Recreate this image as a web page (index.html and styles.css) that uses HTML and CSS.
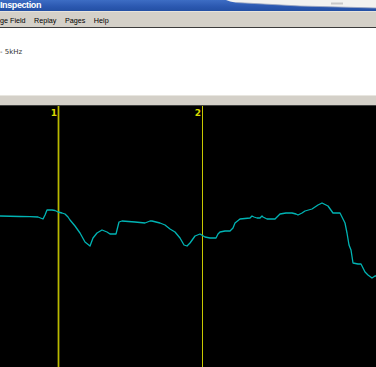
FILE: index.html
```html
<!DOCTYPE html>
<html>
<head>
<meta charset="utf-8">
<link rel="stylesheet" href="styles.css">
</head>
<body>
<div class="window">
  <div class="titlebar">
    <span class="title">Inspection</span>
    <svg class="overlap" width="376" height="11" viewBox="0 0 376 11">
      <path d="M226 0 C229 1 231 2 236 2.5 L300 6 L376 8 L376 0 Z" fill="#f2f2f0"/>
      <path d="M236 2.5 L300 6 L376 8" fill="none" stroke="#9aa6c0" stroke-width="0.8"/>
      <rect x="331" y="2.5" width="12" height="2" fill="#c8c8c8"/>
    </svg>
  </div>
  <div class="menubar">
    <span class="menu">ge Field</span>
    <span class="menu">Replay</span>
    <span class="menu">Pages</span>
    <span class="menu">Help</span>
  </div>
  <div class="infopanel">
    <span class="info">- 5kHz</span>
  </div>
  <div class="toolstrip"></div>
  <div class="plot">
    <svg width="376" height="261" viewBox="0 106 376 261">
      <line x1="58.5" y1="106" x2="58.5" y2="367" stroke="#8a8a00" stroke-width="2"/>
      <line x1="58.5" y1="106" x2="58.5" y2="367" stroke="#b8b800" stroke-width="1"/>
      <line x1="202.5" y1="106" x2="202.5" y2="367" stroke="#c8c800" stroke-width="1"/>
      <text x="57" y="116" class="marker" text-anchor="end">1</text>
      <text x="201" y="116" class="marker" text-anchor="end">2</text>
      <polyline fill="none" stroke="#00b4b4" stroke-width="1.3" stroke-linejoin="round" points="0,216 20,216.5 30,216.7 38,217 43,219 45,215 47,210 52,210 55,210.5 58,212 62,213 65,214 68,217 70,220 75,226 80,233 85,242 90,246 93,238 97,233 102,230 107,232 110,234 116,234 119,222 122,221 135,222 145,223 150,221 152,221 156,222 160,223 165,225 170,229 175,232 180,238 184,245 187,246 190,243 195,236 200,234 205,237 210,238 216,238 218,234 220,232 225,231 230,231 233,228 235,223 240,219 250,218 252,216 254,217 257,218 260,218 262,216 263,217 265,218 267,219 275,219 280,214 286,213 292,213 296,214 298,215 302,213 305,211 312,209 318,205 322,203 328,206 333,213 340,213 345,223 347,233 349,245 351,250 353,263 358,264 361,264 363,268 365,272 368,275 372,278 375,276 376,276"/>
    </svg>
  </div>
</div>
</body>
</html>
```

FILE: styles.css
```css
html, body {
  margin: 0;
  padding: 0;
  background: #000;
}
.window {
  width: 376px;
  height: 367px;
  overflow: hidden;
  display: flex;
  flex-direction: column;
  font-family: "Liberation Sans", sans-serif;
}
.titlebar {
  position: relative;
  height: 11px;
  flex: none;
  background: linear-gradient(to bottom, #3d6dc4 0%, #2b58b0 60%, #2450a4 100%);
  overflow: hidden;
}
.title {
  position: relative;
  z-index: 1;
  display: block;
  color: #fff;
  font-family: "Liberation Sans", sans-serif;
  font-weight: bold;
  font-size: 9px;
  line-height: 9px;
  margin-top: 1px;
  letter-spacing: -0.4px;
}
.overlap {
  position: absolute;
  left: 0;
  top: 0;
}
.menubar {
  height: 17px;
  flex: none;
  box-sizing: border-box;
  background: #d4d0c8;
  border-top: 1px solid #e6e3dc;
  border-bottom: 1px solid #3c3c3c;
  display: flex;
  align-items: center;
  gap: 8.5px;
  padding-top: 2px;
  font-family: "Liberation Sans", sans-serif;
  font-size: 7.2px;
  color: #000;
}
.infopanel {
  height: 67px;
  flex: none;
  background: #fff;
  padding-top: 20px;
  box-sizing: border-box;
}
.info {
  display: block;
  font-family: "DejaVu Sans", sans-serif;
  font-size: 7px;
  color: #333;
  line-height: 9px;
}
.toolstrip {
  height: 11px;
  flex: none;
  box-sizing: border-box;
  background: #d4d0c8;
  border-top: 1px solid #e8e6e0;
  border-bottom: 1px solid #404040;
}
.plot {
  flex: 1;
  background: #000;
}
.plot svg {
  display: block;
}
.marker {
  fill: #d8d800;
  font-family: "DejaVu Sans", sans-serif;
  font-weight: bold;
  font-size: 9px;
}
```
